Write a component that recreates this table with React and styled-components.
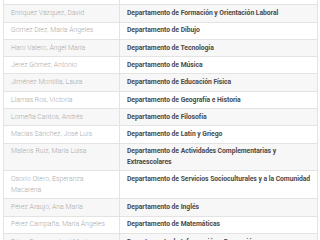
import React from 'react';
import styled, { createGlobalStyle } from 'styled-components';

const GlobalStyle = createGlobalStyle`
  html, body {
    margin: 0;
    padding: 0;
    background: #fff;
    overflow: hidden;
  }
  body {
    font-family: Roboto, "Liberation Sans", sans-serif;
  }
`;

const Viewport = styled.div`
  width: 320px;
  height: 240px;
  overflow: hidden;
  padding: 0 3px;
  box-sizing: border-box;
`;

const Table = styled.table`
  width: 314px;
  margin-top: -13px;
  border-collapse: collapse;
  table-layout: fixed;
  line-height: 10.6px;
`;

const Col = styled.col`
  width: ${(p) => p.$w};
`;

const Row = styled.tr`
  background: ${(p) => (p.$striped ? '#f7f7f7' : '#fff')};
`;

const Cell = styled.td`
  border: 1px solid #e3e3e3;
  padding: 2.85px 2px 2.85px 7px;
  vertical-align: top;
`;

const NameCell = styled(Cell)`
  padding-right: 10px;
  color: #a8a8a8;
  font-size: 6.9px;
  font-weight: 300;
`;

const DeptCell = styled(Cell)`
  color: #4a4a4a;
  font-size: 6.8px;
  font-weight: 700;
  letter-spacing: -0.05px;
`;

const rows = [
  ['Díaz Martín, Carmen', 'Departamento de Francés'],
  ['Enriquez Vázquez, David', 'Departamento de Formación y Orientación Laboral'],
  ['Gómez Díez, María Ángeles', 'Departamento de Dibujo'],
  ['Haro Valero, Ángel María', 'Departamento de Tecnología'],
  ['Jerez Gómez, Antonio', 'Departamento de Música'],
  ['Jiménez Montilla, Laura', 'Departamento de Educación Física'],
  ['Llamas Ros, Victoria', 'Departamento de Geografía e Historia'],
  ['Lomeña Cantos, Andrés', 'Departamento de Filosofía'],
  ['Macías Sánchez, José Luis', 'Departamento de Latín y Griego'],
  ['Mateos Ruiz, María Luisa', 'Departamento de Actividades Complementarias y Extraescolares'],
  ['Osorio Otero, Esperanza Macarena', 'Departamento de Servicios Socioculturales y a la Comunidad'],
  ['Pérez Araujo, Ana María', 'Departamento de Inglés'],
  ['Pérez Campaña, María Ángeles', 'Departamento de Matemáticas'],
  ['Pérez Romero, José María', 'Departamento de Información y Formación'],
];

export default function App() {
  return (
    <Viewport>
      <GlobalStyle />
      <Table>
        <colgroup>
          <Col $w="116px" />
          <Col $w="198px" />
        </colgroup>
        <tbody>
          {rows.map(([name, dept], i) => (
            <Row key={name} $striped={i % 2 === 1}>
              <NameCell>{name}</NameCell>
              <DeptCell>{dept}</DeptCell>
            </Row>
          ))}
        </tbody>
      </Table>
    </Viewport>
  );
}
